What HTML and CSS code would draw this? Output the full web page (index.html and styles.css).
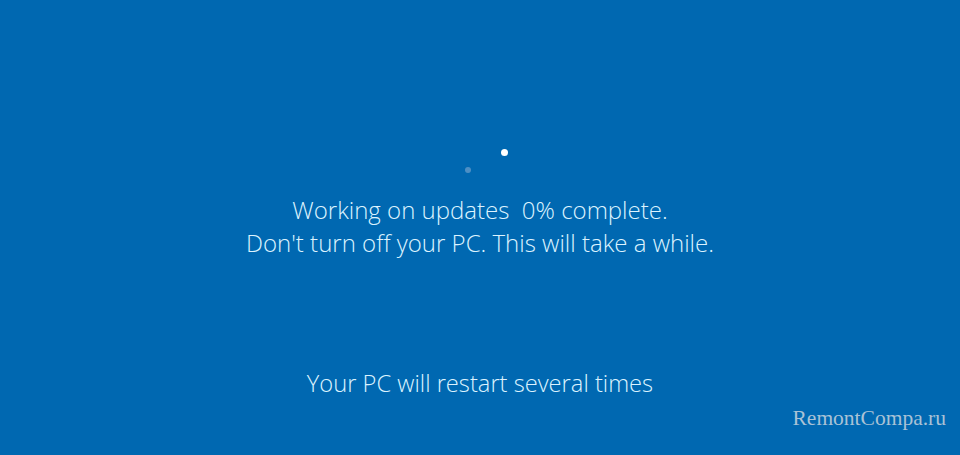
FILE: index.html
```html
<!DOCTYPE html>
<html lang="en">
<head>
    <meta charset="UTF-8">
    <meta name="viewport" content="width=device-width, initial-scale=1.0">
    <title>Working on updates</title>
    <link rel="stylesheet" href="styles.css">
</head>
<body>
    <div class="screen">
        <div class="spinner">
            <span class="dot dot-main"></span>
            <span class="dot dot-faint"></span>
        </div>

        <div class="status">
            <p>Working on updates&nbsp; 0% complete.</p>
            <p>Don't turn off your PC. This will take a while.</p>
        </div>

        <p class="restart">Your PC will restart several times</p>

        <div class="watermark">RemontCompa.ru</div>
    </div>
</body>
</html>
```

FILE: styles.css
```css
body {
    margin: 0;
    background-color: #0068b1;
    font-family: "Open Sans", "Noto Sans", sans-serif;
    color: #dcf3ff;
}
.screen {
    position: relative;
    width: 960px;
    height: 455px;
    display: flex;
    flex-direction: column;
    align-items: center;
    overflow: hidden;
}
.spinner {
    position: relative;
    width: 80px;
    height: 60px;
    margin-top: 140px;
}
.dot {
    position: absolute;
    border-radius: 50%;
}
.dot-main {
    left: 61px;
    top: 9px;
    width: 7px;
    height: 7px;
    background-color: #ffffff;
}
.dot-faint {
    left: 25px;
    top: 27px;
    width: 6px;
    height: 6px;
    background-color: #4d8fc4;
}
.status {
    margin-top: -7px;
    text-align: center;
}
.status p {
    margin: 0;
    font-size: 24px;
    font-weight: 300;
    line-height: 33px;
}
.restart {
    margin: 108px 0 0;
    font-size: 23.7px;
    font-weight: 300;
    line-height: 33px;
}
.watermark {
    position: absolute;
    right: 14px;
    bottom: 24px;
    font-family: "Liberation Serif", serif;
    font-size: 21.5px;
    color: #a9c2d6;
}
```
